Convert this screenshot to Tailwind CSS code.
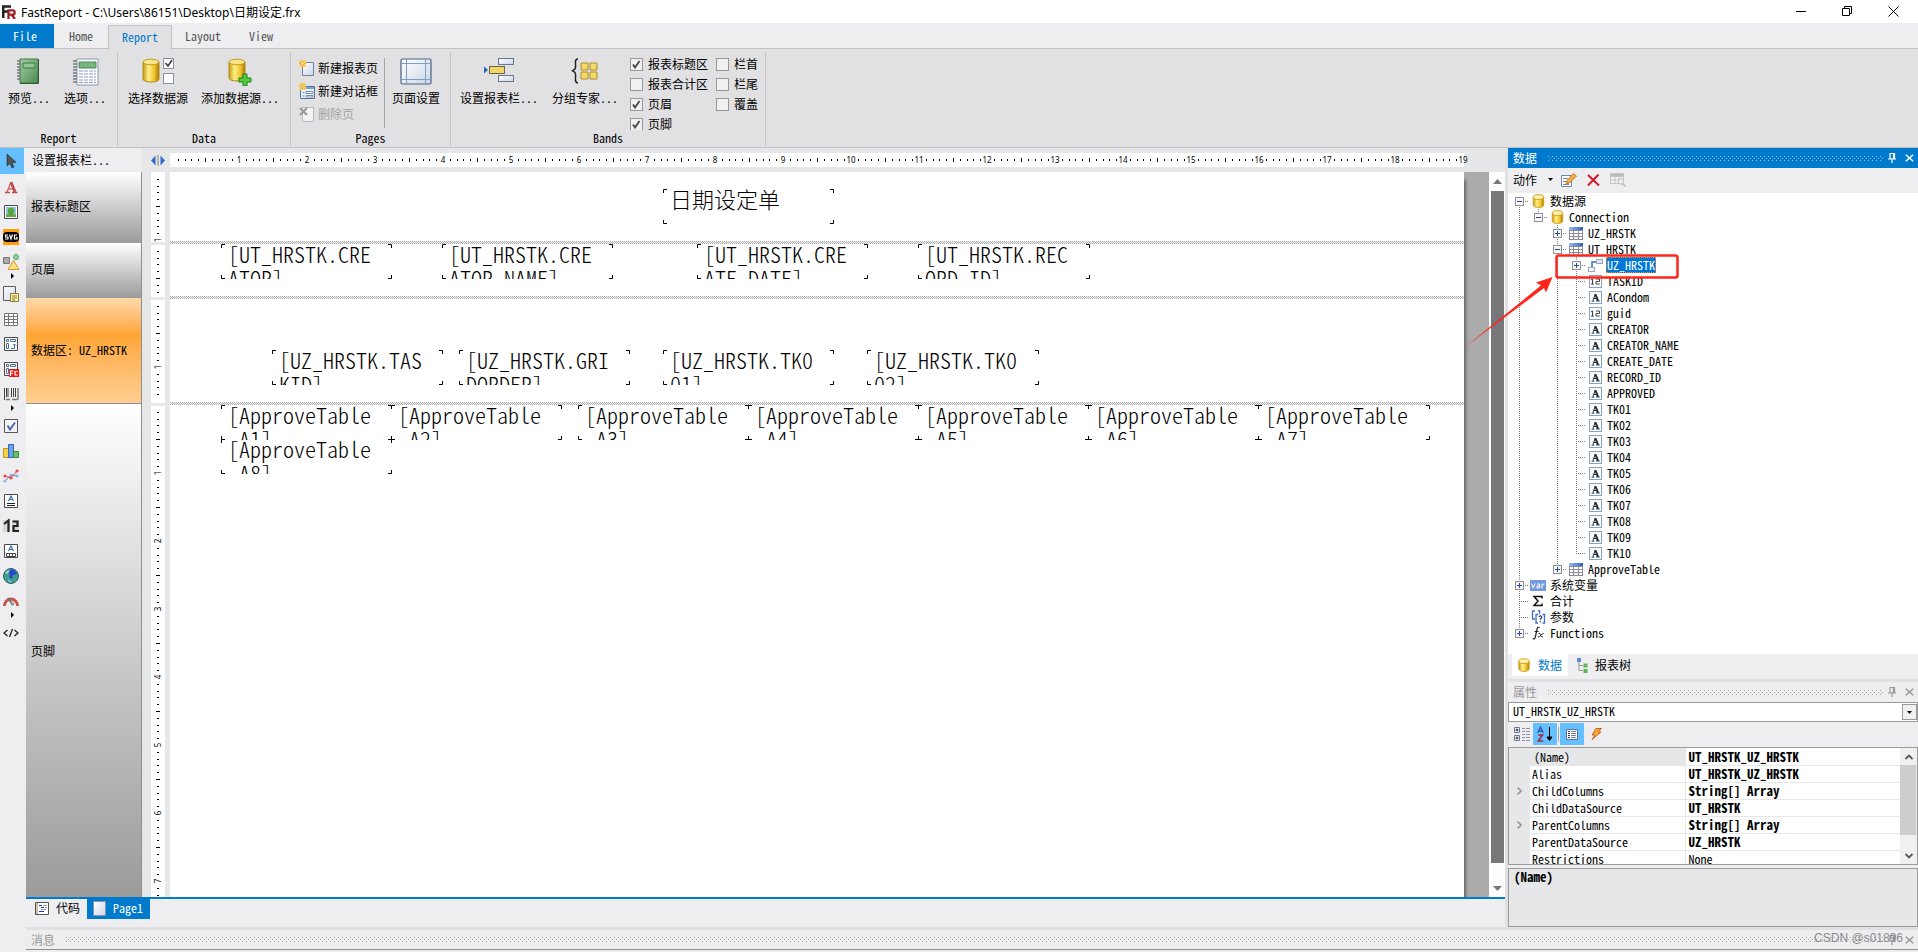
<!DOCTYPE html>
<html lang="zh-CN">
<head>
<meta charset="utf-8">
<title>FastReport</title>
<script src="https://cdn.jsdelivr.net/npm/@tailwindcss/browser@4"></script>
</head>
<body class="h-screen flex flex-col overflow-hidden bg-[#eeeef0] text-black text-xs leading-4 font-['Noto_Sans_CJK_SC',sans-serif] [font-feature-settings:'hwid']">

<svg class="absolute size-0" aria-hidden="true">
  <defs>
    <linearGradient id="gold" x1="0" x2="1" y1="0" y2="0"><stop offset="0" stop-color="#c79a10"/><stop offset=".35" stop-color="#fff08a"/><stop offset=".7" stop-color="#f0c52a"/><stop offset="1" stop-color="#a87a08"/></linearGradient>
    <linearGradient id="green" x1="0" x2="1" y1="0" y2="1"><stop offset="0" stop-color="#a4cfa4"/><stop offset="1" stop-color="#4b8a50"/></linearGradient>
    <linearGradient id="sheet" x1="0" x2="1" y1="0" y2="1"><stop offset="0" stop-color="#ffffff"/><stop offset="1" stop-color="#ccd6e8"/></linearGradient>
    <linearGradient id="blueTop" x1="0" x2="1" y1="0" y2="0"><stop offset="0" stop-color="#9ab8f0"/><stop offset="1" stop-color="#2f5fc4"/></linearGradient>
    <pattern id="gripDark" width="4" height="4" patternUnits="userSpaceOnUse"><path d="M0 0h1v1H0zM2 2h1v1H2z" fill="#aeaeb2"/></pattern>
    <pattern id="gripLight" width="4" height="4" patternUnits="userSpaceOnUse"><path d="M0 0h1v1H0zM2 2h1v1H2z" fill="#7fc0ec"/></pattern>
    <pattern id="checker" width="2" height="2" patternUnits="userSpaceOnUse"><path d="M0 0h1v1H0zM1 1h1v1H1z" fill="#a8a8a8"/></pattern>

    <symbol id="db" viewBox="0 0 14 16"><path d="M1 3.500v9c0 1.700 2.500 3 6 3s6-1.300 6-3v-9z" fill="url(#gold)" stroke="#d09a1a"/><ellipse cx="7" cy="3.500" rx="6" ry="2.800" fill="#fdf0a8" stroke="#d09a1a"/></symbol>
    <symbol id="table" viewBox="0 0 14 13" shape-rendering="crispEdges"><path d="M0 0h14v13H0z" fill="#8a8d94"/><path d="M1 4h3v2H1zM5 4h4v2H5zM10 4h3v2h-3zM1 7h3v2H1zM5 7h4v2H5zM10 7h3v2h-3zM1 10h3v2H1zM5 10h4v2H5zM10 10h3v2h-3z" fill="#fff"/><path d="M0 0h14v3H0z" fill="url(#blueTop)"/></symbol>
    <symbol id="relation" viewBox="0 0 15 14"><path d="M4 10V4h5" fill="none" stroke="#3b6bd0" stroke-width="1.500"/><rect x="8.500" y="1.500" width="6" height="4" fill="#dfe4ee" stroke="#9aa6bb"/><rect x=".5" y="9.500" width="6" height="4" fill="#f4f6fa" stroke="#9aa6bb"/></symbol>
    <symbol id="num" viewBox="0 0 13 13"><rect x=".5" y=".5" width="12" height="12" fill="#fff" stroke="#86a3c3"/><path d="M2 5l1.500-1v5M2 9h3M7 4h3.500v2.500H7V9h3.800" fill="none" stroke="#3a4050"/></symbol>
    <symbol id="alpha" viewBox="0 0 13 13"><rect x=".5" y=".5" width="12" height="12" fill="#fff" stroke="#86a3c3"/><path d="M2.500 10h3M7 10h3.700M4 9.500L6.300 3l3 6.700M5 7.500h3" fill="none" stroke="#222b3a" stroke-width="1"/><path d="M6.300 3l2.600 6.700" stroke="#222b3a" stroke-width="2"/></symbol>
    <symbol id="var" viewBox="0 0 16 11"><path d="M0 0h16v11H0z" fill="#7499dd"/><path d="M1.500 3.500L3.300 8l1.800-4.500M7 4h2.500v4H7V6h2.500M12 8.500V3.500M12 5.500q.5-1.700 2.500-1.500" fill="none" stroke="#fff"/></symbol>
    <symbol id="sigma" viewBox="0 0 12 12"><path d="M10 3.500V1.500H2L6 6l-4 4.500h8V8.500" fill="none" stroke="#111" stroke-width="1.500"/></symbol>
    <symbol id="param" viewBox="0 0 15 14"><path d="M4 1H1.500v8H4M7 .5h1.500V4M7 4.500H5v8.500h2M11.500 4.500h2V13h-2" fill="none" stroke="#3e6fc4" stroke-width="1.300"/><path d="M8 7q.2-1.200 1.400-1.200T10.800 7q0 1-1.400 1.700v1M9.400 11v1.200" fill="none" stroke="#1b3f8c" stroke-width="1.200"/></symbol>
    <symbol id="fx" viewBox="0 0 13 14"><path d="M7.500 1.800Q5.800.3 5.100 3L3.300 11Q2.700 13.800.8 12.500M2.500 5.500h4" fill="none" stroke="#222" stroke-width="1.200"/><path d="M6.500 7.500q1.700-.8 2 1.500t2.500 2M11.500 7.500Q9.500 8 8.500 9.500T6 11" fill="none" stroke="#222" stroke-width="1"/></symbol>
    <symbol id="pin" viewBox="0 0 8 10"><path d="M1.500 .5h5v5M2 0v6M5.500 0v6M0 6h8M4 6v4" fill="none" stroke="currentColor" stroke-width="1.200"/></symbol>
    <symbol id="close" viewBox="0 0 9 8"><path d="M.8.8l7.400 6.400M8.200.8L.8 7.200" stroke="currentColor" stroke-width="1.500" fill="none"/></symbol>
    <symbol id="spark" viewBox="0 0 8 8"><path d="M0 0h8v8H0z" fill="#f9dc7a"/><path d="M4 0v8M0 4h8M1 1l6 6M7 1L1 7" stroke="#e8a21e"/><path d="M3 3h2v2H3z" fill="#fff"/></symbol>
    <symbol id="book" viewBox="0 0 24 26"><path d="M4 1h18v24H4z" fill="url(#green)" stroke="#3d7a45"/><path d="M7 5h12v5H7z" fill="#8fc795" stroke="#3d7a45"/><path d="M22.500 1v24.500H4" fill="none" stroke="#2c5c33"/><path d="M1 3h5M1 6h5M1 9h5M1 12h5M1 15h5M1 18h5M1 21h5" stroke="#747a80" stroke-width="1.500" stroke-dasharray="4 1"/></symbol>
    <symbol id="options" viewBox="0 0 27 28"><path d="M5 1h21v26H5z" fill="#fafcff" stroke="#8a97ab"/><path d="M7 4h17v6H7z" fill="#79b57f" stroke="#4c8a54"/><path d="M7 13h17M7 16h17M7 19h17M7 22h17M7 24.500h17" stroke="#8c9db8" stroke-dasharray="4 1"/><path d="M1 3h5M1 6h5M1 9h5M1 12h5M1 15h5M1 18h5M1 21h5M1 24h5" stroke="#747a80" stroke-width="1.500" stroke-dasharray="4 1"/></symbol>
    <symbol id="dbCheck" viewBox="0 0 32 26"><path d="M1 4v17c0 4 16 4 16 0V4z" fill="url(#gold)" stroke="#b08a16"/><ellipse cx="9" cy="4" rx="8" ry="2.800" fill="#f7e68b" stroke="#c39c22"/><rect x="21.500" y=".5" width="10" height="10" fill="#fff" stroke="#8793a8"/><path d="M23.500 5l2.500 3 4-6" fill="none" stroke="#333" stroke-width="1.500"/><rect x="21.500" y="15.500" width="10" height="10" fill="#fff" stroke="#8793a8"/></symbol>
    <symbol id="dbAdd" viewBox="0 0 24 28"><path d="M1 4v16c0 4 16 4 16 0V4z" fill="url(#gold)" stroke="#b08a16"/><ellipse cx="9" cy="4" rx="8" ry="2.800" fill="#f7e68b" stroke="#c39c22"/><path d="M15 16h4v4h4v4h-4v4h-4v-4h-4v-4h4z" fill="#55c93e" stroke="#19801a"/></symbol>
    <symbol id="pageSetup" viewBox="0 0 32 27"><rect x="1" y="1" width="30" height="25" rx="1.500" fill="url(#sheet)" stroke="#4c6280" stroke-width="1.200"/><path d="M6.500 1v25M25.500 1v25M1 5.500h30M1 21.500h30" stroke="#7f9cc4"/></symbol>
    <symbol id="bandsCfg" viewBox="0 0 32 25"><path d="M1 8.500l4 3.500-4 3.500z" fill="#2f62c0"/><rect x="15.500" y=".5" width="15" height="6" fill="url(#sheet)" stroke="#67768f"/><rect x="6.500" y="8.500" width="15" height="7" fill="#f2d467" stroke="#67624a"/><rect x="15.500" y="17.500" width="15" height="6" fill="url(#sheet)" stroke="#67768f"/></symbol>
    <symbol id="groupExp" viewBox="0 0 28 26"><path d="M7 1Q4 1 4.500 5T4 11L1.500 12.700 4 14.500q1 2 .5 6T7 25" fill="none" stroke="#222" stroke-width="1.500"/><path d="M10 5h7v7h-7zM19 5h7v7h-7zM10 14h7v7h-7zM19 14h7v7h-7z" fill="#f3da66" stroke="#ad8d2c"/></symbol>
    <symbol id="newPage" viewBox="0 0 16 16"><path d="M3.500 2.500h11v13h-11z" fill="url(#sheet)" stroke="#6d83a5"/><use href="#spark" width="7" height="7"/></symbol>
    <symbol id="newDialog" viewBox="0 0 16 16"><path d="M1.500 3.500h14v12h-14z" fill="#e9eef8" stroke="#55739f"/><path d="M2 4h13v2H2z" fill="#7ba0d8"/><path d="M7 8.500h7v2H7zM7 12.500h7v1.500H7zM3.500 9.500h2M3.500 13h2" fill="#fff" stroke="#7b8fae"/><use href="#spark" width="7" height="7"/></symbol>
    <symbol id="delPage" viewBox="0 0 16 16"><path d="M3.500 1.500h11v14h-11z" fill="#f4f4f5" stroke="#b9b9bb"/><path d="M1 2l7 7M8 2L1 9" stroke="#9a9a9c" stroke-width="2"/></symbol>
    <symbol id="expP" viewBox="0 0 9 9" shape-rendering="crispEdges"><path d="M0 0h9v9H0z" fill="#919191"/><path d="M1 1h7v7H1z" fill="#f6f6f6"/><path d="M2 4h5v1H2zM4 2h1v5H4z" fill="#2b4a9b"/></symbol>
    <symbol id="expM" viewBox="0 0 9 9" shape-rendering="crispEdges"><path d="M0 0h9v9H0z" fill="#919191"/><path d="M1 1h7v7H1z" fill="#f6f6f6"/><path d="M2 4h5v1H2z" fill="#2b4a9b"/></symbol>
  </defs>
</svg>

<!-- Title bar -->
<header class="h-[23px] shrink-0 bg-white flex items-center">
  <svg class="ml-0.5 size-[14px]" viewBox="0 0 14 14"><path d="M1.200 13V1.500H9M1.200 6.500H6" fill="none" stroke="#252021" stroke-width="2.600"/><path d="M6.500 14V5.300h4.200q2 0 2 2.200t-2 2.200H7.500M9.500 9.500L13 14" fill="none" stroke="#9d2429" stroke-width="2.300"/></svg>
  <h1 class="ml-[5px] mt-0.5 flex-1 font-['Noto_Sans','Noto_Sans_CJK_SC',sans-serif] text-[12px] [font-feature-settings:normal]">FastReport - C:\Users\86151\Desktop\日期设定.frx</h1>
  <div class="flex">
    <button aria-label="最小化" class="w-[46px] h-5 grid place-items-center"><svg class="size-[11px]" viewBox="0 0 11 11"><path d="M0 5.500h10" stroke="#000"/></svg></button>
    <button aria-label="还原" class="w-[46px] h-5 grid place-items-center"><svg class="size-[11px]" viewBox="0 0 11 11"><path d="M.5 2.500h7v7h-7zM2.500 2.500v-2h7v7h-2" fill="none" stroke="#000"/></svg></button>
    <button aria-label="关闭" class="w-[46px] h-5 grid place-items-center"><svg class="size-[11px]" viewBox="0 0 11 11"><path d="M.5.5l10 10M10.500.5l-10 10" stroke="#000"/></svg></button>
    <span class="w-0.5"></span>
  </div>
</header>

<!-- Ribbon tabs -->
<nav class="h-[26px] shrink-0 flex items-stretch border-b border-[#c3c3c6] text-[#555] pt-px">
  <button class="w-[54px] bg-[#007acc] text-white pr-1">File</button>
  <button class="w-[54px]">Home</button>
  <button class="w-[64px] mt-px -mb-px pb-0.5 bg-[#e1e1e3] border border-b-0 border-[#c3c3c6] text-[#007acc]">Report</button>
  <button class="w-[62px]">Layout</button>
  <button class="w-[54px]">View</button>
</nav>

<!-- Ribbon -->
<section class="h-[99px] shrink-0 flex bg-[#e1e1e3] border-b border-[#c3c3c6] pt-[3px] pb-px">
  <div class="w-[118px] border-r border-[#c3c3c6] flex flex-col">
    <div class="flex-1 flex gap-2 pl-[5px] pt-1.5">
      <button class="w-12 flex flex-col items-center"><svg class="h-[26px] w-6 mb-1.5 mr-0.5"><use href="#book"/></svg>预览...</button>
      <button class="w-12 flex flex-col items-center"><svg class="h-7 w-[27px] mb-1"><use href="#options"/></svg>选项...</button>
    </div>
    <div class="text-center">Report</div>
  </div>
  <div class="w-[173px] border-r border-[#c3c3c6] flex flex-col">
    <div class="flex-1 flex gap-[13px] pl-2.5 pt-1.5">
      <button class="w-[60px] flex flex-col items-center whitespace-nowrap"><svg class="h-[26px] w-8 mb-1.5"><use href="#dbCheck"/></svg>选择数据源</button>
      <button class="w-[78px] flex flex-col items-center whitespace-nowrap"><svg class="h-7 w-6 mb-1"><use href="#dbAdd"/></svg>添加数据源...</button>
    </div>
    <div class="text-center">Data</div>
  </div>
  <div class="w-40 border-r border-[#c3c3c6] flex flex-col">
    <div class="flex-1 flex pl-2 pt-1.5">
      <div class="w-[86px] mr-[7px] h-[70px] border-r border-[#a5a5a8] flex flex-col gap-[7px] pt-0.5">
        <button class="flex items-center gap-[3px]"><svg class="size-4"><use href="#newPage"/></svg>新建报表页</button>
        <button class="flex items-center gap-[3px]"><svg class="size-4"><use href="#newDialog"/></svg>新建对话框</button>
        <button class="flex items-center gap-[3px] text-[#a2a2a4]" disabled><svg class="size-4"><use href="#delPage"/></svg>删除页</button>
      </div>
      <button class="w-12 h-[50px] flex flex-col items-center"><svg class="h-[27px] w-8 mb-[5px]"><use href="#pageSetup"/></svg>页面设置</button>
    </div>
    <div class="text-center">Pages</div>
  </div>
  <div class="w-[315px] border-r border-[#c3c3c6] flex flex-col">
    <div class="h-[79px] flex pl-[9px] pt-1.5 overflow-hidden">
      <button class="w-[78px] h-[50px] flex flex-col items-center"><svg class="h-[25px] w-8 mb-[7px]"><use href="#bandsCfg"/></svg>设置报表栏...</button>
      <button class="w-[66px] h-[50px] ml-3.5 flex flex-col items-center"><svg class="h-[26px] w-7 mb-1.5"><use href="#groupExp"/></svg>分组专家...</button>
      <div id="bandChecksA" class="ml-3 w-[86px] flex flex-col gap-1 -mt-0.5"></div>
      <div id="bandChecksB" class="flex flex-col gap-1 -mt-0.5"></div>
    </div>
    <div class="text-center">Bands</div>
  </div>
</section>

<div class="flex-1 min-h-0 flex">

  <!-- Object toolbox -->
  <aside class="w-[26px] shrink-0 flex flex-col" id="tools"></aside>

  <div class="flex-1 min-w-0 flex flex-col">
    <div class="flex-1 min-h-0 flex">

      <main class="flex-1 min-w-0 flex flex-col">
        <div class="flex-1 min-h-0 flex bg-[#e6e7e9]">
          <!-- Band list -->
          <div class="w-[116px] shrink-0 flex flex-col">
            <button class="h-6 pl-1.5 text-left bg-[#eeeef0]">设置报表栏...</button>
            <div class="flex-1 flex flex-col border-r border-[#8f8f91]">
              <div class="h-[71px] pl-[5px] pb-1 flex items-center bg-linear-to-b from-white to-[#9b9b9b]">报表标题区</div>
              <div class="h-[55px] pl-[5px] pb-1 flex items-center bg-linear-to-b from-white to-[#9b9b9b]">页眉</div>
              <div class="h-[106px] pl-[5px] pb-0.5 flex items-center border-b border-[#8f8f91] bg-linear-to-b from-[#ffd8a8] via-[#ffa633] via-35% to-[#ffcf92]">数据区: UZ_HRSTK</div>
              <div class="flex-1 pl-[5px] flex items-center bg-linear-to-b from-white to-[#9b9b9b]">页脚</div>
            </div>
          </div>
          <!-- Vertical ruler -->
          <div class="w-7 shrink-0 pl-[9px] pr-[5px] flex flex-col">
            <div class="h-6 -mx-1 flex items-center justify-center"><svg class="h-[11px] w-[14px] shrink-0" viewBox="0 0 14 11"><path d="M4.500.5v10L0 5.500zM9.500.5v10L14 5.500z" fill="#3569c8"/><path d="M7 0v11" stroke="#a8a48c" stroke-width="1.500"/></svg></div>
            <svg class="vruler h-[70px] w-[14px] mb-[3px] bg-white"></svg>
            <svg class="vruler h-[52px] w-[14px] mb-[3px] bg-white"></svg>
            <svg class="vruler h-[103px] w-[14px] mb-[3px] bg-white"></svg>
            <svg class="vruler flex-1 min-h-0 w-[14px] bg-white"></svg>
          </div>
          <!-- Page -->
          <div class="flex-1 min-w-0 flex flex-col">
            <div class="h-6 pt-[5px]"><svg id="hruler" class="w-[1294px] h-[14px] bg-white overflow-visible"></svg></div>
            <div class="flex-1 min-h-0 flex bg-[#ababab] overflow-hidden">
              <div id="page" class="w-[1294px] shrink-0 bg-white flex flex-col shadow-[2px_8px_3px_#666]">
                <div class="band relative h-[69px]"></div>
                <svg class="h-[3px] w-full"><rect width="100%" height="3" fill="url(#checker)"/></svg>
                <div class="band relative h-[52px]"></div>
                <svg class="h-[3px] w-full"><rect width="100%" height="3" fill="url(#checker)"/></svg>
                <div class="band relative h-[103px]"></div>
                <svg class="h-[3px] w-full"><rect width="100%" height="3" fill="url(#checker)"/></svg>
                <div class="band relative flex-1"></div>
              </div>
            </div>
          </div>
          <!-- Scrollbar -->
          <div class="w-4 shrink-0 flex flex-col pt-6">
            <div class="flex-1 bg-[#fdfdfd] pl-0.5 pr-px flex flex-col">
              <button aria-label="向上" class="h-[19px] grid place-items-center"><svg class="w-[9px] h-[5px]"><path d="M0 5L4.500 0 9 5z" fill="#77777a"/></svg></button>
              <div class="flex-1 bg-[#77777a]"></div>
              <button aria-label="向下" class="h-[34px] grid place-items-center pt-4"><svg class="w-[9px] h-[5px]"><path d="M0 0l4.500 5L9 0z" fill="#77777a"/></svg></button>
            </div>
          </div>
        </div>
        <div class="h-[30px] shrink-0 border-t-2 border-[#007acc] flex items-start">
          <button class="h-5 w-[61px] pb-0.5 pl-[9px] flex items-center gap-[7px]"><svg class="w-[14px] h-[13px]" viewBox="0 0 14 13"><path d="M.5.5h13v12H.5z" fill="#fff" stroke="#55544a"/><path d="M1 1h2v11H1z" fill="#c9c5ae"/><path d="M4 3.500h3M6 5.500h3M4 9.500h5" stroke="#1233e0"/><path d="M8 3.500h4M10 5.500h2M6 7.500h5" stroke="#a0a0a0"/></svg>代码</button>
          <button class="h-5 w-[63px] pb-0.5 pl-1.5 flex items-center gap-[7px] bg-[#007acc] text-white"><svg class="w-[13px] h-[15px]" viewBox="0 0 13 15"><path d="M.5.500h12v14H.5z" fill="url(#sheet)" stroke="#8795ab"/></svg>Page1</button>
        </div>
      </main>

      <!-- Docked panels -->
      <aside class="w-[413px] shrink-0 border-l-[3px] border-[#e1e1e3] flex flex-col">
        <div class="h-5 shrink-0 flex items-center bg-[#007acc] text-white pl-[5px] pr-1">
          <h2>数据</h2>
          <svg class="flex-1 h-[5px] ml-[11px]"><rect width="100%" height="5" fill="url(#gripLight)"/></svg>
          <button aria-label="固定" class="ml-1 mr-[9px]"><svg class="w-2 h-2.5"><use href="#pin"/></svg></button>
          <button aria-label="关闭"><svg class="w-[9px] h-2"><use href="#close"/></svg></button>
        </div>
        <div class="h-[25px] shrink-0 flex items-center pl-[5px] pb-0.5">
          <button class="flex items-center gap-[11px]">动作<svg class="w-[5px] h-[3px]"><path d="M0 0h5L2.500 3z"/></svg></button>
          <button aria-label="编辑" class="ml-2"><svg class="w-4 h-[14px]" viewBox="0 0 16 14"><path d="M.5 2.500h10v11H.5z" fill="#fff" stroke="#6d87b5"/><path d="M2 5.500h5M2 8.500h4M2 11.500h6" stroke="#6d87b5"/><path d="M5 11l1-3.500L12.500.5l3 2.500L8.500 10z" fill="#f2ae45" stroke="#c07c28"/></svg></button>
          <button aria-label="删除" class="ml-2.5"><svg class="w-[13px] h-3" viewBox="0 0 13 12"><path d="M1 1l11 10.500M11.500.5L1 11.500" stroke="#d8182c" stroke-width="2"/></svg></button>
          <button aria-label="查看" class="ml-2.5" disabled><svg class="w-4 h-[14px]" viewBox="0 0 16 14"><path d="M.5.500h13v10H.5zM.5 3.500h13M5 3v8M9 3v8M.5 7h13" fill="#f6f6f7" stroke="#c4c4c6"/><path d="M1 1h12v2H1z" fill="#bcbcbe"/><circle cx="11" cy="8.500" r="2.800" fill="#eee" stroke="#c0c0c2"/><path d="M13 11l2.500 2.500" stroke="#b8b8ba" stroke-width="1.500"/></svg></button>
        </div>
        <div class="relative flex-1 min-h-0 bg-white pl-0.5">
          <ul id="tree"></ul>
          <!-- Callout -->
          <svg class="absolute z-10 left-[-45px] top-[58px] w-[220px] h-[100px] pointer-events-none" viewBox="0 0 220 100"><rect x="93.500" y="4.500" width="121" height="22" rx="2" fill="none" stroke="#ff2619" stroke-width="2.500"/><path d="M2 96L78 34.500l-5-3L89.500 26l-6.500 15.500-2-4.500z" fill="#ff2619"/></svg>
        </div>
        <div class="h-[25px] shrink-0 flex items-stretch pl-1 pb-[3px]">
          <button class="w-14 pl-1.5 flex items-center gap-2 bg-white text-[#007acc] pr-1"><svg class="w-3 h-[14px]"><use href="#db"/></svg>数据</button>
          <button class="pl-[9px] flex items-center gap-[7px]"><svg class="w-[11px] h-[15px]" viewBox="0 0 11 15"><path d="M2 3v9.500h4M2 7.500h4" fill="none" stroke="#999"/><path d="M0 0h4v4H0z" fill="#5d8bd6"/><path d="M6.500 5.500h4v4h-4zM6.500 11h4v4h-4z" fill="#5fb55c"/></svg>报表树</button>
        </div>
        <div class="h-[3px] shrink-0 bg-[#e1e1e3]"></div>
        <div class="h-5 shrink-0 flex items-center text-[#98989a] pl-[5px] pr-1">
          <h2>属性</h2>
          <svg class="flex-1 h-[5px] ml-[11px]"><rect width="100%" height="5" fill="url(#gripDark)"/></svg>
          <button aria-label="固定" class="ml-1 mr-[9px]"><svg class="w-2 h-2.5"><use href="#pin"/></svg></button>
          <button aria-label="关闭"><svg class="w-[9px] h-2"><use href="#close"/></svg></button>
        </div>
        <div class="relative h-5 shrink-0">
          <select aria-label="对象" class="block w-full h-full appearance-none bg-white border border-[#9a9a9c] pl-1 pb-0.5 text-xs leading-4"><option>UT_HRSTK_UZ_HRSTK</option></select>
          <span class="absolute right-px top-0.5 bottom-0.5 w-[15px] border border-[#9a9a9c] bg-[#f0f0f1] grid place-items-center pointer-events-none"><svg class="w-[5px] h-[3px]"><path d="M0 0h5L2.500 3z"/></svg></span>
        </div>
        <div class="h-[25px] shrink-0 flex items-center pb-px">
          <button aria-label="按分类" class="w-[25px] h-[22px] pl-0.5 grid place-items-center"><svg class="size-4" viewBox="0 0 16 16"><path d="M.5 1.500h5v5h-5zM.5 9.500h5v5h-5z" fill="#fff" stroke="#64789c"/><path d="M1.500 4h3M3 2.500v3M1.500 12h3M3 10.500v3" stroke="#223"/><path d="M8 2.500h3M8 5.500h3M8 8.500h3M8 11.500h3M8 14.500h3M12 2.500h4M12 5.500h4M12 8.500h4M12 11.500h4M12 14.500h4" stroke="#8c94a8"/></svg></button>
          <button aria-label="按字母" class="w-6 h-[22px] bg-[#66c0ff] grid place-items-center"><svg class="size-4" viewBox="0 0 16 16"><path d="M.8 7L3.500.8 6.200 7M2 5h3.500" fill="none" stroke="#2e56a8" stroke-width="1.300"/><path d="M1.200 9h4.500L1.200 15h5" fill="none" stroke="#a32a4a" stroke-width="1.500"/><path d="M12.500 1v13M10 11l2.500 3.500L15 11z" fill="#000" stroke="#000"/></svg></button>
          <span class="w-px h-[15px] mx-px bg-[#a8a8aa]"></span>
          <button aria-label="属性" class="w-6 h-[22px] bg-[#66c0ff] grid place-items-center"><svg class="w-3 h-[11px]" viewBox="0 0 12 11"><path d="M.5.500h11v10H.5z" fill="#fff" stroke="#5a6ea8"/><path d="M2 2.500h2M2 4.500h2M2 6.500h2M2 8.500h2" stroke="#335"/><path d="M5 2.500h5M5 4.500h5M5 6.500h5M5 8.500h5" stroke="#7a84a0"/></svg></button>
          <button aria-label="事件" class="w-6 h-[22px] grid place-items-center"><svg class="w-[11px] h-3" viewBox="0 0 11 12"><path d="M5 .5h5.500L7 4h3L1 11.500 4 7H1z" fill="#f7a934" stroke="#c8602a"/></svg></button>
        </div>
        <div class="h-[118px] shrink-0 flex border border-[#9a9a9c] bg-[#e6e7e9] overflow-hidden">
          <div class="flex-1 min-w-0 overflow-hidden">
            <table class="w-full table-fixed border-collapse"><colgroup><col class="w-[21px]"><col class="w-[155px]"><col></colgroup><tbody id="props"></tbody></table>
          </div>
          <div class="w-[17px] flex flex-col bg-[#f0f0f0]">
            <button aria-label="向上" class="h-[17px] grid place-items-center"><svg class="w-2 h-[6px]" viewBox="0 0 8 6"><path d="M.5 5L4 1.500 7.500 5" fill="none" stroke="#555" stroke-width="1.800"/></svg></button>
            <div class="h-[70px] mr-px bg-[#cdcdcd]"></div>
            <div class="flex-1"></div>
            <button aria-label="向下" class="h-[17px] grid place-items-center"><svg class="w-2 h-[6px]" viewBox="0 0 8 6"><path d="M.5 1L4 4.500 7.500 1" fill="none" stroke="#555" stroke-width="1.800"/></svg></button>
          </div>
        </div>
        <div class="h-[59px] mt-[3px] shrink-0 border border-[#9a9a9c] bg-[#e6e7e9] pl-[5px] text-[13px] leading-4 font-bold">(Name)</div>
      </aside>
    </div>

    <!-- Messages -->
    <footer class="relative shrink-0 h-[25px] border-t-[3px] border-[#e1e1e3]">
      <div class="h-5 flex items-center text-[#98989a] pl-[5px] pr-1 border-b border-[#8f8f91]">
        <h2>消息</h2>
        <svg class="flex-1 h-[5px] ml-[11px]"><rect width="100%" height="5" fill="url(#gripDark)"/></svg>
        <button aria-label="固定" class="ml-1 mr-[9px]"><svg class="w-2 h-2.5"><use href="#pin"/></svg></button>
        <button aria-label="关闭"><svg class="w-[9px] h-2"><use href="#close"/></svg></button>
      </div>
      <div class="absolute right-[15px] top-0 font-['Liberation_Sans',sans-serif] text-[12px] leading-4 text-[#8a8a8c] [font-feature-settings:normal]">CSDN @s01896</div>
    </footer>
  </div>
</div>

<script>
const SVG = (cls, vb, body) => `<svg class="${cls}" viewBox="${vb}">${body}</svg>`;

// Ribbon check boxes
const check = ([text, on]) => `<label class="relative h-4 shrink-0 flex items-center gap-[5px] whitespace-nowrap"><input type="checkbox" ${on ? 'checked' : ''} class="peer appearance-none size-[13px] border border-[#98989a] bg-[#f0f0f1]"><svg class="absolute left-0.5 top-1 size-[9px] invisible peer-checked:visible" viewBox="0 0 9 9"><path d="M1 4.500l2 3 4.500-6.500" fill="none" stroke="#444" stroke-width="1.800"/></svg>${text}</label>`;
document.getElementById('bandChecksA').innerHTML = [['报表标题区', 1], ['报表合计区', 0], ['页眉', 1], ['页脚', 1]].map(check).join('');
document.getElementById('bandChecksB').innerHTML = [['栏首', 0], ['栏尾', 0], ['覆盖', 0]].map(check).join('');

// Toolbox
const frame = '<path d="M1.500 1.500h13v13h-13z" fill="#fff" stroke="#4a4a4c"/>';
const tools = [
  ['选择', '<path d="M4 1v12l3-2.500 2 4.500 2-1-2-4.300 4-.5z" fill="#555" stroke="#222" stroke-width=".6"/>'],
  ['文本', '<path d="M2 13.500h5M9 13.500h5.500" stroke="#c04a4a" stroke-width="1.500"/><path d="M4 13L8 3M5.500 10h5" stroke="#d86464" stroke-width="1.400"/><path d="M8 3l4 10" stroke="#c04a4a" stroke-width="2.800"/>'],
  ['图片', frame + '<path d="M3 3h10v10H3z" fill="#9cc4f0"/><path d="M3 10h10v3H3z" fill="#62b04a"/><circle cx="8" cy="7" r="3.500" fill="#57a83c"/><path d="M8 9v4" stroke="#7a6a3a"/>'],
  ['SVG', '<path d="M0 0h16v16H0z" fill="#ff9c0a"/><rect y="3" width="16" height="10" rx="4"/><path d="M5 6H2.500v2H5v2H2M6.500 5.500L8 10l1.500-4.500M14 6h-2.500v4H14V8.500h-1" fill="none" stroke="#fff" stroke-width="1.200"/>'],
  ['图形', '<path d="M.5 3.500h6v6h-6z" fill="#aaa" stroke="#777"/><circle cx="13" cy="3" r="2.500" fill="#8fd6a0" stroke="#4fa364"/><path d="M10.500 6.500L16 15.500H5z" fill="#fbe08a" stroke="#d8971c"/>'],
  '>',
  ['子报表', '<path d="M.5.500h12v14H.5z" fill="url(#sheet)" stroke="#5c5c60"/><path d="M7.500 7.500h8v8h-8z" fill="#fff8a8" stroke="#8a7a34"/><path d="M9 10h5M9 12h5M9 14h3" stroke="#8a7a34"/>'],
  ['表格', '<path d="M1.500 2.500h13v12h-13zM1.500 5.500h13M1.500 8.500h13M1.500 11.500h13M5.500 2v12M10.500 2v12" fill="#fff" stroke="#77777a"/>'],
  ['矩阵', frame + '<path d="M3.500 3.500h2v2h-2zM7.500 3.500h5v2h-5zM3.500 7.500h2v5h-2z" fill="#fff" stroke="#4c6f9c"/><path d="M8 12.500h3.500V8M10 9.500L11.500 8l1.500 1.500" fill="none" stroke="#3d6fb8"/>'],
  ['高级矩阵', frame + '<path d="M3.500 3.500h2v2h-2zM7.500 3.500h5v2h-5zM3.500 7.500h2v5h-2z" fill="#fff" stroke="#4c6f9c"/><path d="M6 8h10v8H6z" fill="#f01414"/><path d="M7.500 15v-5h3M7.500 12.500h2.500M14.500 10.500H12v3.500h2.500" fill="none" stroke="#fff" stroke-width="1.200"/>'],
  ['条码', '<path d="M1.500 2v12M3.500 2v9M5 2v9M8.500 2v9M10.500 2v9M12.500 2v9M15 2v12" stroke="#444"/><path d="M3 13.500h4M9 13.500h5" stroke="#777" stroke-width="1.500"/>'],
  '>',
  ['复选框', '<path d="M1.500 1.500h13v13h-13z" fill="#f4f4f6" stroke="#55555a"/><path d="M4.500 7.500l2.500 4 5-7" fill="none" stroke="#4a69a8" stroke-width="2"/>'],
  ['图表', '<path d="M.5 5.500h5v9h-5z" fill="#f6cf4a" stroke="#c49518"/><path d="M5.500 1.500h5v13h-5z" fill="#6ba4ee" stroke="#2f66c0"/><path d="M10.500 8.500h5v6h-5z" fill="#6fc06a" stroke="#3a8a3a"/>'],
  ['迷你图', '<path d="M2 13l4-4 4-2 4 1" fill="none" stroke="#5a86d0"/><path d="M2 8l6 2 6-7" fill="none" stroke="#f04848"/><g fill="#8fb0e8"><circle cx="2" cy="13" r="1.600"/><circle cx="8" cy="7" r="1.600"/><circle cx="14" cy="8" r="1.600"/></g><g fill="#f04848"><circle cx="2" cy="8" r="1.600"/><circle cx="8" cy="10" r="1.600"/><circle cx="14" cy="3" r="1.600"/></g>'],
  ['RTF', frame + '<path d="M5.500 8L8 3l2.500 5M6.500 6.500h3" fill="none" stroke="#3f6fb8" stroke-width="1.200"/><path d="M4 10.500h8M4 12.500h8" stroke="#222"/>'],
  ['数字', '<path d="M0 2h7v12H0zM9 2h7v12H9z" fill="#d8d8da"/><path d="M1 6l4.500-3.500V14M9.500 3.500h5V8h-4v5h5.500" fill="none" stroke="#222" stroke-width="2.200"/>'],
  ['单元格文本', frame + '<path d="M5.500 8L8 3l2.500 5M6.500 6.500h3" fill="none" stroke="#3f6fb8" stroke-width="1.200"/><path d="M3.500 10.500h9v3h-9zM6.500 10.500v3M9.500 10.500v3" fill="#fff" stroke="#444"/>'],
  ['地图', '<circle cx="8" cy="8" r="7.500" fill="#3f9c86" stroke="#3a5a78"/><path d="M8 1q5 1 6 5l-4 1-1 4-3-2 1-3-3-1z" fill="#2747d0"/><path d="M2 5q2-3 5-3L5 6z" fill="#8de0a8"/><path d="M5 11l4 3-3 .5z" fill="#7cc8f0"/>'],
  ['仪表', '<path d="M1.500 13A6.500 7 0 1 1 14.500 13" fill="none" stroke="#c6544c" stroke-width="2.800"/><path d="M5 5l5 7" stroke="#777" stroke-width="2"/><circle cx="9.500" cy="11" r="1.800" fill="#999"/>'],
  '>',
  ['HTML', '<path d="M4.500 5L1 8l3.500 3M11.500 5L15 8l-3.500 3M9.500 4l-3 8" fill="none" stroke="#222" stroke-width="1.300"/>'],
];
document.getElementById('tools').innerHTML = tools.map((t, i) => t === '>'
  ? '<span class="h-[7px] w-[25px] flex items-center justify-center"><svg class="w-[3px] h-[6px] -mt-1" viewBox="0 0 3 6"><path d="M0 0l3 3-3 3z"/></svg></span>'
  : `<button aria-label="${t[0]}" class="${i ? 'w-6 h-[25px] pr-0.5 grid place-items-center' : 'w-6 h-[26px] pr-0.5 grid place-items-center bg-[#66c0ff]'}">${SVG('size-4', '0 0 16 16', t[1])}</button>`).join('');

// Rulers: ten ticks to the centimetre
const CM = 68;
const hr = document.getElementById('hruler');
let h = '';
for (let i = 1; i < 190; i++) {
  if (i % 10 === 0) continue;
  const x = Math.round(1 + i * CM / 10);
  h += i % 5 === 0 ? `<path d="M${x} 5h1v4h-1z"/>` : `<path d="M${x} 6h1v2h-1z"/>`;
}
for (let n = 1; n <= 19; n++) h += `<text x="${1 + n * CM}" y="10" text-anchor="middle">${n}</text>`;
hr.innerHTML = `<g class="font-['Noto_Sans',sans-serif] text-[8px] [font-feature-settings:normal]">${h}</g>`;
document.querySelectorAll('.vruler').forEach((r, k) => {
  const len = r.getBoundingClientRect().height;
  let v = '';
  for (let i = 1; i * CM / 10 < len - 1; i++) {
    const y = Math.round(i * CM / 10) - (k ? 1 : 0);
    if (i % 10 === 0) v += `<text transform="translate(10 ${y}) rotate(-90)" text-anchor="middle">${i / 10}</text>`;
    else v += i % 5 === 0 ? `<path d="M5 ${y}h4v1H5z"/>` : `<path d="M6 ${y}h2v1H6z"/>`;
  }
  r.innerHTML = `<g class="font-['Noto_Sans',sans-serif] text-[8px] [font-feature-settings:normal]">${v}</g>`;
});

// Report objects: [left, top, width, line 1, line 2] on each band's canvas
const fields = [
  [[493, 17, 171, '日期设定单', '']],
  [[51, 0, 171, '[UT_HRSTK.CRE', 'ATOR]'], [272, 0, 171, '[UT_HRSTK.CRE', 'ATOR_NAME]'], [527, 0, 171, '[UT_HRSTK.CRE', 'ATE_DATE]'], [748, 0, 172, '[UT_HRSTK.REC', 'ORD_ID]']],
  [[102, 51, 171, '[UZ_HRSTK.TAS', 'KID]'], [289, 51, 171, '[UZ_HRSTK.GRI', 'DORDER]'], [493, 51, 171, '[UZ_HRSTK.TK0', '01]'], [697, 51, 172, '[UZ_HRSTK.TK0', '02]']],
  [[51, 0, 171, '[ApproveTable', '.A1]'], [221, 0, 171, '[ApproveTable', '.A2]'], [408, 0, 171, '[ApproveTable', '.A3]'], [578, 0, 171, '[ApproveTable', '.A4]'], [748, 0, 171, '[ApproveTable', '.A5]'], [918, 0, 171, '[ApproveTable', '.A6]'], [1088, 0, 172, '[ApproveTable', '.A7]'], [51, 34, 171, '[ApproveTable', '.A8]']],
];
document.querySelectorAll('.band').forEach((b, i) => {
  b.innerHTML = fields[i].map(([x, y, w, a, c]) => `<div class="absolute h-[35px] overflow-hidden pl-[7px] text-[22px] leading-6 font-light whitespace-pre" style="left:${x}px;top:${y}px;width:${w}px"><svg class="absolute inset-0 size-full" viewBox="0 0 ${w} 35"><path d="M.5 4V.5H4M${w - 4} .5h3.500V4M${w - .5} 31v3.500h-3.500M4 34.500H.5V31" fill="none" stroke="#000"/></svg><p class="-mt-[3px]">${a}\n${c}</p></div>`).join('');
});

// Data tree: guide letters are v = line through, t = branch, l = last branch, s = blank
const leaf = (n, icon, last) => [(last ? 'vsvl' : 'vsvt'), '', icon, n];
const rows = [
  ['f', '-', 'db', '数据源'], ['vl', '-', 'db', 'Connection'], ['vst', '+', 'table', 'UZ_HRSTK'], ['vst', '-', 'table', 'UT_HRSTK'],
  ['vsvt', '+', 'relation', 'UZ_HRSTK', 1],
  leaf('TASKID', 'num'), leaf('ACondom', 'alpha'), leaf('guid', 'num'),
  ...['CREATOR', 'CREATOR_NAME', 'CREATE_DATE', 'RECORD_ID', 'APPROVED', 'TK01', 'TK02', 'TK03', 'TK04', 'TK05', 'TK06', 'TK07', 'TK08', 'TK09'].map(n => leaf(n, 'alpha')),
  leaf('TK10', 'alpha', 1),
  ['vsl', '+', 'table', 'ApproveTable'], ['t', '+', 'var', '系统变量'], ['t', '', 'sigma', '合计'], ['t', '', 'param', '参数'], ['l', '+', 'fx', 'Functions'],
];
const iconSize = { db: 'w-[13px] h-[14px]', table: 'w-[14px] h-[13px]', relation: 'w-[15px] h-[14px]', num: 'size-[13px]', alpha: 'size-[13px]', var: 'w-4 h-[11px]', sigma: 'size-3', param: 'w-[15px] h-[14px]', fx: 'w-[13px] h-[14px]' };
const guide = { v: 'M9.500 0v16', t: 'M9.500 0v16M9 8.500h10', l: 'M9.500 0v8M9 8.500h10', f: 'M9.500 8v8M9 8.500h10', s: '' };
document.getElementById('tree').innerHTML = rows.map(([g, e, icon, text, sel]) => {
  const cells = [...g].map((c, i) => SVG('w-[19px] h-4 shrink-0', '0 0 19 16',
    `<path d="${guide[c]}" stroke="#808080" stroke-dasharray="1 1" fill="none"/>` + (e && i === g.length - 1 ? `<use href="${e === '+' ? '#expP' : '#expM'}" x="5" y="4" width="9" height="9"/>` : ''))).join('');
  const label = sel ? `<span class="ml-0.5 px-px h-4 bg-[#0078d7] text-white outline-1 -outline-offset-1 outline-dotted outline-[#ff8728]">${text}</span>` : `<span class="ml-[3px]">${text}</span>`;
  return `<li class="h-4 flex items-center whitespace-nowrap">${cells}<span class="w-[18px] h-4 shrink-0 flex items-center justify-center"><svg class="${iconSize[icon]}"><use href="#${icon}"/></svg></span>${label}</li>`;
}).join('');

// Property grid
document.getElementById('props').innerHTML = [
  ['(Name)', 'UT_HRSTK_UZ_HRSTK'], ['Alias', 'UT_HRSTK_UZ_HRSTK'], ['ChildColumns', 'String[] Array', 1], ['ChildDataSource', 'UT_HRSTK'],
  ['ParentColumns', 'String[] Array', 1], ['ParentDataSource', 'UZ_HRSTK'], ['Restrictions', 'None'],
].map(([k, v, x], i) => `<tr class="h-[17px]"><td class="p-0">${x ? '<svg class="ml-2 w-[5px] h-2" viewBox="0 0 5 8"><path d="M.5.500L4 4 .5 7.500" fill="none" stroke="#999" stroke-width="1.600"/></svg>' : ''}</td><th scope="row" class="${i ? 'p-0 pl-0.5 text-left font-normal leading-[15px] bg-white border-b border-r border-[#e6e7e9]' : 'p-0 pl-1 text-left font-normal leading-[15px] border-b border-r border-[#e6e7e9]'}">${k}</th><td class="${v === 'None' ? 'p-0 pl-[3px] leading-[15px] bg-white border-b border-[#e6e7e9]' : 'p-0 pl-[3px] text-[13px] leading-[15px] font-bold bg-white border-b border-[#e6e7e9]'}">${v}</td></tr>`).join('');
</script>
</body>
</html>
